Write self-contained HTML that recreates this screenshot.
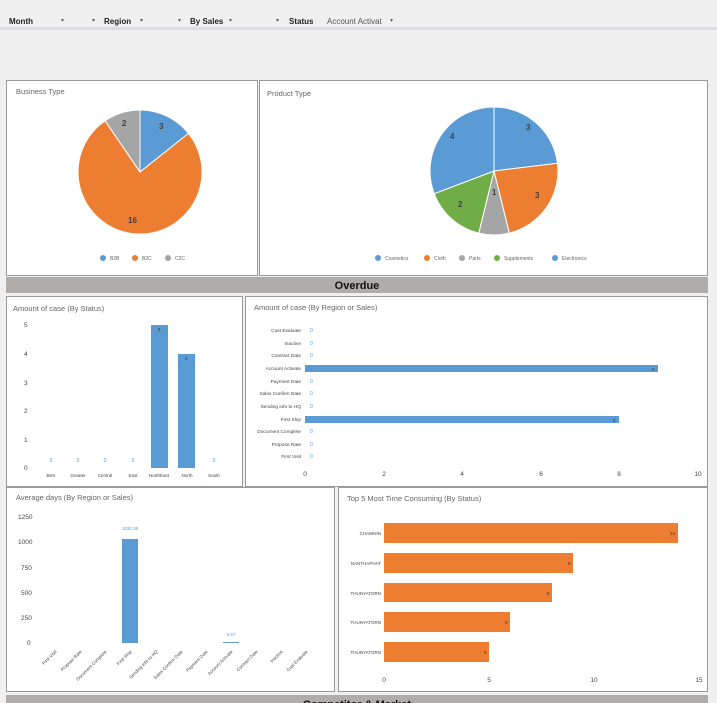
<!DOCTYPE html>
<html><head><meta charset="utf-8"><style>
html,body{margin:0;padding:0;background:#f0f0f0;}
svg{display:block;font-family:"Liberation Sans",sans-serif;}
</style></head><body>
<svg width="717" height="703" viewBox="0 0 717 703" xmlns="http://www.w3.org/2000/svg">
<rect width="717" height="703" fill="#f0f0f0"/>
<rect x="0" y="27" width="717" height="3" fill="#dcdde3"/>
<g font-size="8" fill="#222" font-weight="bold">
<text x="9" y="24">Month</text><text x="104" y="24">Region</text><text x="190" y="24">By Sales</text><text x="289" y="24">Status</text>
</g>
<text x="327" y="24" font-size="8" fill="#555">Account Activat</text>
<g font-size="6" fill="#666"><text x="61" y="22">▾</text><text x="92" y="22">▾</text><text x="140" y="22">▾</text><text x="178" y="22">▾</text><text x="229" y="22">▾</text><text x="276" y="22">▾</text><text x="390" y="22">▾</text></g>

<g fill="#fff" stroke="#9a9a9a" stroke-width="1">
<rect x="6.5" y="80.5" width="251" height="195"/>
<rect x="259.5" y="80.5" width="448" height="195"/>
<rect x="6.5" y="296.5" width="236" height="190"/>
<rect x="245.5" y="296.5" width="462" height="190"/>
<rect x="6.5" y="487.5" width="328" height="204"/>
<rect x="338.5" y="487.5" width="369" height="204"/>
</g>
<rect x="6" y="277" width="702" height="16" fill="#b0acaa"/>
<text x="357" y="289" font-size="11" font-weight="bold" text-anchor="middle" fill="#111">Overdue</text>
<rect x="6" y="695" width="702" height="8" fill="#b0acaa"/>
<text x="357" y="708" font-size="11" font-weight="bold" text-anchor="middle" fill="#111">Competitor &amp; Market</text>

<g font-size="7.5" fill="#666">
<text x="16" y="94">Business Type</text>
<text x="267" y="96">Product Type</text>
<text x="13" y="311">Amount of case (By Status)</text>
<text x="254" y="310">Amount of case (By Region or Sales)</text>
<text x="16" y="500">Average days (By Region or Sales)</text>
<text x="347" y="501">Top 5 Most Time Consuming (By Status)</text>
</g>

<g stroke="#fff" stroke-width="1">
<path d="M140 172 L140 110 A62 62 0 0 1 188.5 133.4 Z" fill="#5b9bd5"/>
<path d="M140 172 L188.5 133.4 A62 62 0 1 1 105.1 120.8 Z" fill="#ed7d31"/>
<path d="M140 172 L105.1 120.8 A62 62 0 0 1 140 110 Z" fill="#a5a5a5"/>
</g>
<g font-size="8" font-weight="bold" fill="#404040"><text x="159" y="129">3</text><text x="122" y="126">2</text><text x="128" y="223">16</text></g>
<g font-size="5" fill="#666">
<circle cx="103" cy="258" r="3" fill="#5b9bd5"/><text x="110" y="260">B2B</text>
<circle cx="135" cy="258" r="3" fill="#ed7d31"/><text x="142" y="260">B2C</text>
<circle cx="168" cy="258" r="3" fill="#a5a5a5"/><text x="175" y="260">C2C</text>
</g>

<g stroke="#fff" stroke-width="1">
<path d="M494 171 L494 107 A64 64 0 0 1 557.5 163.3 Z" fill="#5b9bd5"/>
<path d="M494 171 L557.5 163.3 A64 64 0 0 1 509.3 233.1 Z" fill="#ed7d31"/>
<path d="M494 171 L509.3 233.1 A64 64 0 0 1 478.7 233.1 Z" fill="#a5a5a5"/>
<path d="M494 171 L478.7 233.1 A64 64 0 0 1 434.2 193.7 Z" fill="#70ad47"/>
<path d="M494 171 L434.2 193.7 A64 64 0 0 1 494 107 Z" fill="#5b9bd5"/>
</g>
<g font-size="8" font-weight="bold" fill="#404040"><text x="526" y="130">3</text><text x="450" y="139">4</text><text x="535" y="198">3</text><text x="492" y="195">1</text><text x="458" y="207">2</text></g>
<g font-size="5" fill="#666">
<circle cx="378" cy="258" r="3" fill="#5b9bd5"/><text x="385" y="260">Cosmetics</text>
<circle cx="427" cy="258" r="3" fill="#ed7d31"/><text x="434" y="260">Cloth</text>
<circle cx="462" cy="258" r="3" fill="#a5a5a5"/><text x="469" y="260">Parts</text>
<circle cx="497" cy="258" r="3" fill="#70ad47"/><text x="504" y="260">Supplements</text>
<circle cx="555" cy="258" r="3" fill="#5b9bd5"/><text x="562" y="260">Electronics</text>
</g>

<g font-size="6.5" fill="#444"><text x="24" y="327">5</text><text x="24" y="356">4</text><text x="24" y="385">3</text><text x="24" y="413">2</text><text x="24" y="442">1</text><text x="24" y="470">0</text></g>
<rect x="151" y="325" width="17" height="143" fill="#5b9bd5"/>
<rect x="178" y="354" width="17" height="114" fill="#5b9bd5"/>
<g font-size="4.5" fill="#333"><text x="158" y="331">5</text><text x="185" y="360">4</text></g>
<g font-size="5" fill="#5b9bd5" text-anchor="middle"><text x="51" y="462">0</text><text x="78" y="462">0</text><text x="105" y="462">0</text><text x="133" y="462">0</text><text x="214" y="462">0</text></g>
<g font-size="4.5" fill="#444" text-anchor="middle"><text x="51" y="477">BKK</text><text x="78" y="477">Greater</text><text x="105" y="477">Central</text><text x="133" y="477">East</text><text x="159" y="477">NorthEast</text><text x="187" y="477">North</text><text x="214" y="477">South</text></g>

<g font-size="4.8" fill="#444" text-anchor="end">
<text x="301" y="332">Cust Evaluate</text><text x="301" y="345">Inactive</text><text x="301" y="357">Contract Date</text><text x="301" y="370">Account Activate</text><text x="301" y="383">Payment Date</text><text x="301" y="395">Sales Confirm Date</text><text x="301" y="408">Sending info to HQ</text><text x="301" y="421">First Ship</text><text x="301" y="433">Document Complete</text><text x="301" y="446">Propose Rate</text><text x="301" y="458">First Visit</text>
</g>
<g font-size="5" fill="#5b9bd5"><text x="310" y="332">0</text><text x="310" y="345">0</text><text x="310" y="357">0</text><text x="310" y="383">0</text><text x="310" y="395">0</text><text x="310" y="408">0</text><text x="310" y="433">0</text><text x="310" y="446">0</text><text x="310" y="458">0</text></g>
<rect x="305" y="365" width="353" height="7" fill="#5b9bd5"/>
<rect x="305" y="416" width="314" height="7" fill="#5b9bd5"/>
<g font-size="4.5" fill="#333"><text x="652" y="371">9</text><text x="613" y="422">8</text></g>
<g font-size="6.5" fill="#444" text-anchor="middle"><text x="305" y="476">0</text><text x="384" y="476">2</text><text x="462" y="476">4</text><text x="541" y="476">6</text><text x="619" y="476">8</text><text x="698" y="476">10</text></g>

<g font-size="6.5" fill="#444"><text x="18" y="519">1250</text><text x="18" y="544">1000</text><text x="21" y="570">750</text><text x="21" y="595">500</text><text x="21" y="620">250</text><text x="27" y="645">0</text></g>
<rect x="122" y="539" width="16" height="104" fill="#5b9bd5"/>
<rect x="223" y="642" width="16" height="1" fill="#5b9bd5"/>
<g font-size="4.5" fill="#5b9bd5" text-anchor="middle"><text x="130" y="530">1030.38</text><text x="231" y="636">5.67</text></g>
<g font-size="4.5" fill="#444" text-anchor="end">
<text transform="translate(57,652) rotate(-45)">First Visit</text>
<text transform="translate(82,652) rotate(-45)">Propose Rate</text>
<text transform="translate(107,652) rotate(-45)">Document Complete</text>
<text transform="translate(132,652) rotate(-45)">First Ship</text>
<text transform="translate(158,652) rotate(-45)">Sending Info to HQ</text>
<text transform="translate(183,652) rotate(-45)">Sales Confirm Date</text>
<text transform="translate(208,652) rotate(-45)">Payment Date</text>
<text transform="translate(233,652) rotate(-45)">Account Activate</text>
<text transform="translate(258,652) rotate(-45)">Contract Date</text>
<text transform="translate(283,652) rotate(-45)">Inactive</text>
<text transform="translate(308,652) rotate(-45)">Cust Evaluate</text>
</g>

<g fill="#ed7d31">
<rect x="384" y="523" width="294" height="20"/>
<rect x="384" y="553" width="189" height="20"/>
<rect x="384" y="583" width="168" height="19"/>
<rect x="384" y="612" width="126" height="20"/>
<rect x="384" y="642" width="105" height="20"/>
</g>
<g font-size="4.5" fill="#444" text-anchor="end">
<text x="381" y="535">CHAWNIN</text><text x="381" y="565">NANTHAPHAT</text><text x="381" y="595">THUNYATORN</text><text x="381" y="624">THUNYATORN</text><text x="381" y="654">THUNYATORN</text>
</g>
<g font-size="4.5" fill="#333"><text x="670" y="535">14</text><text x="568" y="565">9</text><text x="547" y="595">8</text><text x="505" y="624">6</text><text x="484" y="654">5</text></g>
<g font-size="6.5" fill="#444" text-anchor="middle"><text x="384" y="682">0</text><text x="489" y="682">5</text><text x="594" y="682">10</text><text x="699" y="682">15</text></g>
</svg>
</body></html>
